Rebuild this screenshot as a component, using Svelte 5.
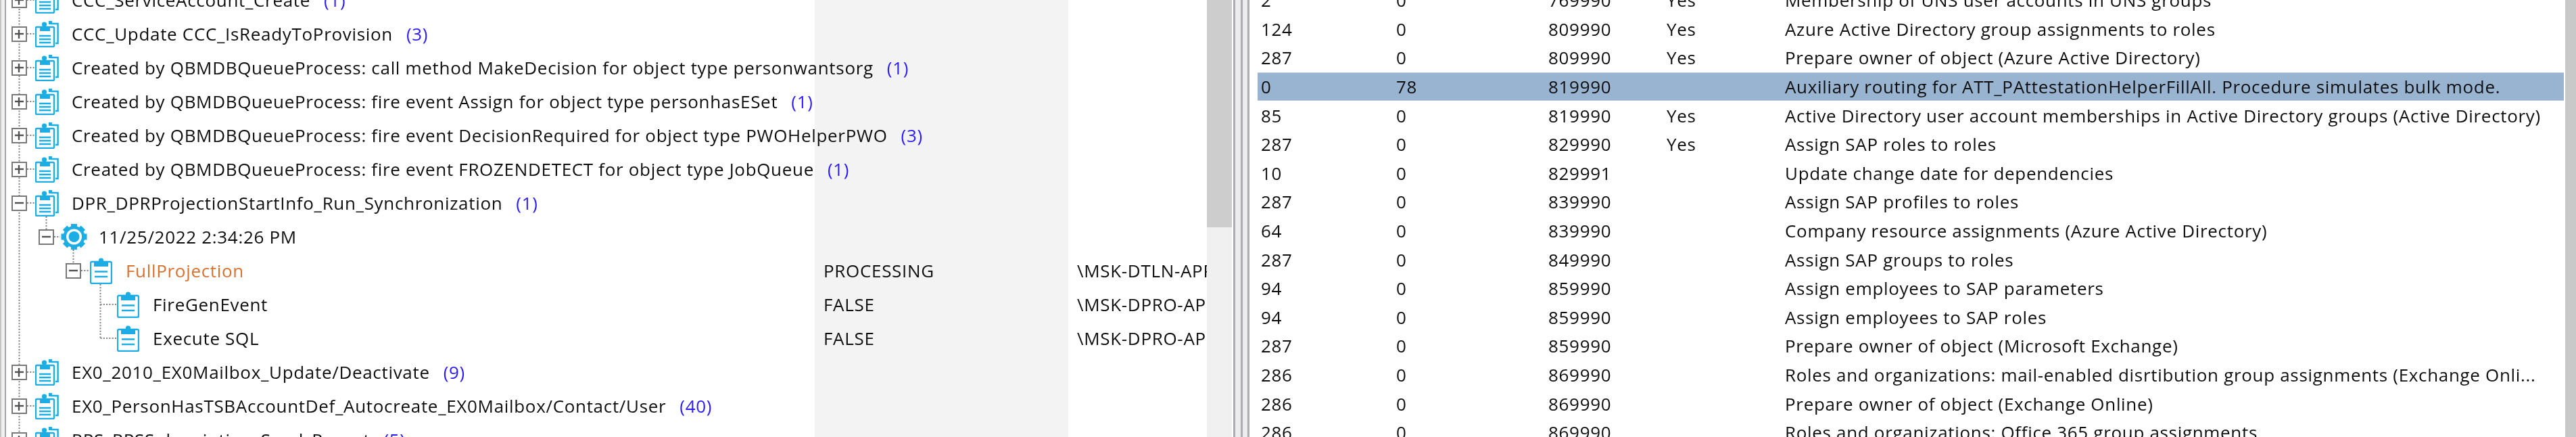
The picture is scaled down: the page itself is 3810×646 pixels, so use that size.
<script>
  const treeRows = [
    { depth: 0, icon: 'group', open: false, name: 'CCC_ServiceAccount_Create', count: 1 },
    { depth: 0, icon: 'group', open: false, name: 'CCC_Update CCC_IsReadyToProvision', count: 3 },
    { depth: 0, icon: 'group', open: false, name: 'Created by QBMDBQueueProcess: call method MakeDecision for object type personwantsorg', count: 1 },
    { depth: 0, icon: 'group', open: false, name: 'Created by QBMDBQueueProcess: fire event Assign for object type personhasESet', count: 1 },
    { depth: 0, icon: 'group', open: false, name: 'Created by QBMDBQueueProcess: fire event DecisionRequired for object type PWOHelperPWO', count: 3 },
    { depth: 0, icon: 'group', open: false, name: 'Created by QBMDBQueueProcess: fire event FROZENDETECT for object type JobQueue', count: 1 },
    { depth: 0, icon: 'group', open: true, name: 'DPR_DPRProjectionStartInfo_Run_Synchronization', count: 1 },
    { depth: 1, icon: 'gear', open: true, name: '11/25/2022 2:34:26 PM' },
    { depth: 2, icon: 'task', open: true, name: 'FullProjection', active: true, state: 'PROCESSING', server: '\\MSK-DTLN-APP01' },
    { depth: 3, icon: 'task', name: 'FireGenEvent', state: 'FALSE', server: '\\MSK-DPRO-APP01' },
    { depth: 3, icon: 'task', name: 'Execute SQL', state: 'FALSE', server: '\\MSK-DPRO-APP01' },
    { depth: 0, icon: 'group', open: false, name: 'EX0_2010_EX0Mailbox_Update/Deactivate', count: 9 },
    { depth: 0, icon: 'group', open: false, name: 'EX0_PersonHasTSBAccountDef_Autocreate_EX0Mailbox/Contact/User', count: 40 },
    { depth: 0, icon: 'group', open: false, name: 'RPS_RPSSubscription_Send_Report', count: 5 }
  ];

  const steps = [
    ['2', '0', '769990', 'Yes', 'Membership of UNS user accounts in UNS groups'],
    ['124', '0', '809990', 'Yes', 'Azure Active Directory group assignments to roles'],
    ['287', '0', '809990', 'Yes', 'Prepare owner of object (Azure Active Directory)'],
    ['0', '78', '819990', '', 'Auxiliary routing for ATT_PAttestationHelperFillAll. Procedure simulates bulk mode.'],
    ['85', '0', '819990', 'Yes', 'Active Directory user account memberships in Active Directory groups (Active Directory)'],
    ['287', '0', '829990', 'Yes', 'Assign SAP roles to roles'],
    ['10', '0', '829991', '', 'Update change date for dependencies'],
    ['287', '0', '839990', '', 'Assign SAP profiles to roles'],
    ['64', '0', '839990', '', 'Company resource assignments (Azure Active Directory)'],
    ['287', '0', '849990', '', 'Assign SAP groups to roles'],
    ['94', '0', '859990', '', 'Assign employees to SAP parameters'],
    ['94', '0', '859990', '', 'Assign employees to SAP roles'],
    ['287', '0', '859990', '', 'Prepare owner of object (Microsoft Exchange)'],
    ['286', '0', '869990', '', 'Roles and organizations: mail-enabled disrtibution group assignments (Exchange Onli...'],
    ['286', '0', '869990', '', 'Prepare owner of object (Exchange Online)'],
    ['286', '0', '869990', '', 'Roles and organizations: Office 365 group assignments']
  ];

  const selectedStep = 3;
  const teeth = [0, 45, 90, 135, 180, 225, 270, 315];

  // dotted tree guides, in tree body coordinates
  const guides = [
    'M19.5 0V646',
    ...treeRows.filter((r) => r.depth === 0).map((r, i) => `M31 ${i < 7 ? i * 50 : (i + 4) * 50}H43`),
    'M59.5 320V339M71 350H80',
    'M99.5 369V389M111 400H124',
    'M139.5 420V500M139.5 450H163M139.5 500H163'
  ];
</script>

<div class="screen">
  <section class="tree-pane">
    <div class="tree-body">
      <svg class="guides" width="1196" height="646" aria-hidden="true">
        {#each guides as d}
          <path {d} />
        {/each}
      </svg>

      {#each treeRows as row}
        <div class="tree-row">
          <div class="name-cell" style="padding-left: {row.depth * 40 + 8}px">
            {#if row.open !== undefined}
              <span class="expander" class:open={row.open}></span>
            {:else}
              <span class="expander-gap"></span>
            {/if}

            {#if row.icon === 'group'}
              <svg class="icon group" width="35" height="39" viewBox="0 0 35 39">
                <path class="line" d="M23 4H33.6V33H30" />
                <path class="fill" d="M20 0H25V5H20Z" />
                <rect class="line" x="1" y="9" width="27" height="29" rx="1.5" />
                <circle class="fill" cx="13.5" cy="5" r="3.6" />
                <rect class="fill" x="7" y="8" width="15" height="7" />
                <path class="line" d="M6 22H23M6 27H23M6 32H23" />
              </svg>
            {:else if row.icon === 'gear'}
              <svg class="icon gear" width="41" height="38" viewBox="0 0 41 38">
                <g transform="translate(20.5 19)">
                  {#each teeth as angle}
                    <rect class="fill" x="-4.5" y="-19" width="9" height="8" transform="rotate({angle})" />
                  {/each}
                  <circle class="fill" r="16" />
                  <circle r="11.5" fill="#fff" />
                  <circle class="fill" r="8" />
                </g>
              </svg>
            {:else}
              <svg class="icon task" width="33" height="39" viewBox="0 0 33 39">
                <rect class="line" x="1" y="6" width="31" height="32" rx="2" />
                <circle class="fill" cx="16.5" cy="4" r="3.6" />
                <rect class="fill" x="6" y="7" width="21" height="6" />
                <path class="line" d="M7 20.5H26M7 28H26" />
              </svg>
            {/if}

            <span class="name" class:active={row.active}>{row.name}</span>
            {#if row.count}
              <span class="count">({row.count})</span>
            {/if}
          </div>
          <div class="state-cell">{row.state ?? ''}</div>
          <div class="server-cell"><span>{row.server ?? ''}</span></div>
        </div>
      {/each}
    </div>
    <div class="scrollbar"><div class="thumb"></div></div>
  </section>

  <div class="splitter"><i></i><i></i><i></i></div>

  <section class="steps-pane">
    <div class="steps-body">
      {#each steps as step, i}
        <div class="step-row" class:selected={i === selectedStep}>
          {#each step as cell}
            <span>{cell}</span>
          {/each}
        </div>
      {/each}
    </div>
    <div class="steps-scrollbar"></div>
  </section>
</div>

<style>
  :global(body) {
    margin: 0;
    background: #fff;
  }

  .screen {
    display: flex;
    width: 3810px;
    height: 646px;
    overflow: hidden;
    font-family: "Open Sans", "Noto Sans", sans-serif;
    font-size: 26px;
    letter-spacing: 0.68px;
    color: #0e0e0e;
    background: #fff;
    filter: blur(0.5px);
  }

  .tree-pane {
    display: flex;
    flex: none;
    width: 1824px;
    height: 646px;
    border-left: 2px solid #c4c4c4;
    box-sizing: border-box;
    box-shadow: inset 5px 0 0 #f0f0f0, inset 7px 0 0 #a2a2a8;
    padding-left: 7px;
  }

  .tree-body {
    position: relative;
    flex: none;
    width: 1776px;
    overflow: hidden;
    margin-top: 0;
  }

  .guides {
    position: absolute;
    left: 0;
    top: 0;
  }

  .guides path {
    fill: none;
    stroke: #808080;
    stroke-width: 2;
    stroke-dasharray: 2 2.3;
  }

  .tree-row {
    position: relative;
    display: grid;
    grid-template-columns: 1196px 375px 205px;
    height: 50px;
    top: -25px;
  }

  /* long names run on over the grey state column */
  .name-cell {
    position: relative;
    z-index: 1;
    display: flex;
    align-items: center;
    white-space: nowrap;
  }

  .expander {
    position: relative;
    flex: none;
    width: 23px;
    height: 23px;
    box-sizing: border-box;
    border: 2.5px solid #787878;
    background: #fff;
    margin-right: 12px;
  }

  .expander::before,
  .expander:not(.open)::after {
    content: "";
    position: absolute;
    background: #505050;
  }

  .expander::before {
    left: 3px;
    right: 3px;
    top: 7px;
    height: 4px;
    transform: scaleY(0.6);
  }

  .expander:not(.open)::after {
    top: 3px;
    bottom: 3px;
    left: 7px;
    width: 4px;
    transform: scaleX(0.6);
  }

  .expander-gap {
    flex: none;
    width: 35px;
  }

  .icon {
    position: relative;
    flex: none;
    background: #fff;
  }

  .icon.gear {
    margin-left: -3px;
    margin-right: 16px;
  }

  .icon.group {
    margin-right: 19px;
  }

  .icon.task {
    margin-left: 1px;
    margin-right: 20px;
  }

  .line {
    fill: none;
    stroke: #1badE3;
    stroke-width: 2.4;
  }

  .fill {
    fill: #1badE3;
  }

  .name.active {
    color: #d9712f;
  }

  .count {
    margin-left: 20px;
    color: #2a1aff;
  }

  .state-cell {
    display: flex;
    align-items: center;
    padding-left: 13px;
    background: #f3f3f3;
  }

  .server-cell {
    display: flex;
    align-items: center;
    padding-left: 13px;
    overflow: hidden;
    white-space: nowrap;
  }

  .scrollbar {
    flex: none;
    width: 37px;
    background: #f0f0f0;
  }

  .thumb {
    height: 336px;
    background: #cdcdcd;
  }

  .splitter {
    display: flex;
    flex: none;
    justify-content: space-between;
    width: 24px;
    background: #ececec;
  }

  .splitter i {
    width: 3px;
    background: #acacb0;
  }

  .steps-pane {
    display: flex;
    flex: 1;
    min-width: 0;
  }

  .steps-body {
    flex: 1;
    min-width: 0;
    padding-left: 12px;
    margin-top: -21px;
  }

  .step-row {
    display: grid;
    grid-template-columns: 200px 225px 175px 175px 1fr;
    align-items: center;
    height: 42.6px;
    box-sizing: border-box;
    padding-left: 5px;
    white-space: nowrap;
  }

  .step-row.selected {
    background: #99b4d1;
    border-top: 1px solid #bccde0;
    border-bottom: 1px solid #bccde0;
  }

  .steps-scrollbar {
    flex: none;
    width: 16px;
    margin-left: 2px;
    background: #c9c9c9;
  }
</style>
